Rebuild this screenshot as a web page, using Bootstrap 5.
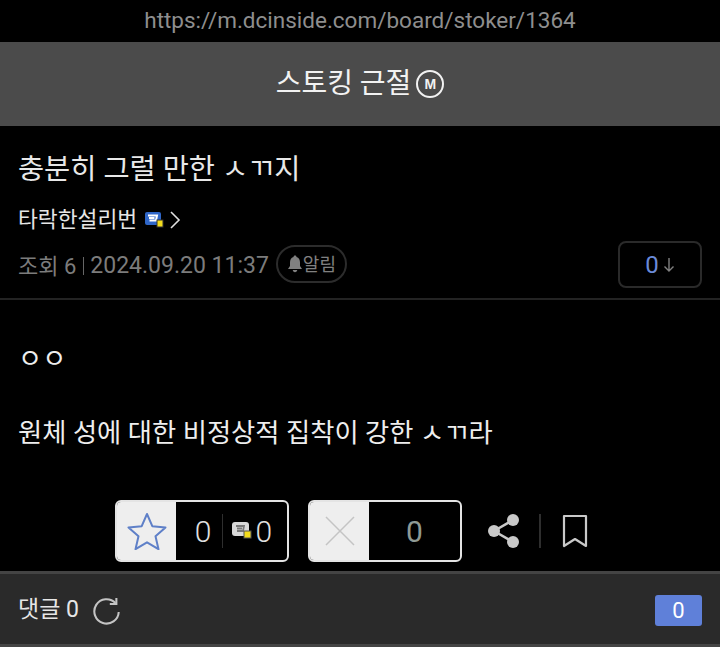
<!DOCTYPE html>
<html lang="ko">
<head>
  <meta charset="UTF-8">
  <title>충분히 그럴 만한 ㅅㄲ지</title>
  <link rel="stylesheet" href="https://cdn.jsdelivr.net/npm/bootstrap@5.3.0/dist/css/bootstrap.min.css">
  <style>
    html, body { height: 647px; overflow: hidden; }
    body {
      background: #000;
      color: #eee;
      font-family: Roboto, "Noto Sans CJK KR", sans-serif;
    }
    .url-bar { height: 42px; color: #8e8e8e; font-size: 22.500px; }
    .board-bar { height: 84px; background: #4b4b4b; color: #f2f2f2; font-size: 28px; font-weight: 400; gap: 5px; }
    .minor-mark {
      width: 28px; height: 28px; border: 2px solid #f2f2f2; border-radius: 50%;
      font: 700 14px "Liberation Sans", sans-serif;
    }
    .post-head { height: 174px; padding: 0 18px; border-bottom: 2px solid #232323; }
    .post-title { height: 84px; font-size: 28.400px; line-height: 88px; margin: 0; font-weight: 400; color: #e8e8e8; }
    .writer-row { height: 30px; margin-top: -5px; font-size: 21.600px; color: #e6e6e6; }
    .meta-row { height: 42px; margin-top: 10px; color: #7c7c7c; font-size: 23px; }
    .view-count { font-size: 22px; }
    .meta-sep { width: 1px; height: 18px; background: #666; margin: 0 6px 0 7px; }
    .alert-pill {
      height: 38px; padding: 0 9px; margin: -4px 0 0 7px; border: 2px solid #2c2c2c; border-radius: 19px;
      font-size: 18px; color: #808080;
    }
    .down-btn {
      width: 84px; height: 47px; margin-top: -3px; border: 2px solid #2a2a2a; border-radius: 8px;
      font-size: 24px; color: #6a8ad8; line-height: 1;
    }
    .post-body { height: 201px; padding: 0 18px; font-size: 26.300px; color: #eee; }
    .body-line { height: 36px; line-height: 36px; margin: 0; }
    .body-one { padding-top: 41px; box-sizing: content-box; }
    .body-two { padding-top: 38px; box-sizing: content-box; }
    .vote-row { height: 62px; margin-top: -1px; padding-left: 115px; }
    .vote-box {
      height: 62px; border: 2px solid #e4e4e4; border-radius: 6px; overflow: hidden;
    }
    .vote-icon { width: 59px; background: #eee; }
    .vote-count { font-size: 30px; font-weight: 300; color: #e0e0e0; }
    .up-box { width: 174px; }
    .up-box .vote-count { padding-left: 4px; }
    .down-box { width: 154px; margin-left: 19px; }
    .down-box .vote-count { color: #8f9a94; font-weight: 400; }
    .count-sep { width: 1px; height: 34px; background: #2e2e2e; margin: 0 9px 0 10px; }
    .badge-icon { overflow: visible; }
    .share-icon { margin-left: 26px; }
    .tool-sep { width: 2px; height: 34px; background: #2e2e2e; margin: 0 21px 0 17px; }
    .reply-bar {
      height: 76px; margin-top: 9px; background: #2a2a2a; border-top: 3px solid #444;
      border-bottom: 3px solid #444; padding: 3px 18px 0; font-size: 23px; color: #e6e6e6;
    }
    .refresh-icon { margin-left: 13px; }
    .reply-count {
      width: 47px; height: 31px; background: #5f80d9; border-radius: 3px; font-size: 22px; color: #fff;
    }
  </style>
</head>
<body>

  <!-- Address bar -->
  <div class="url-bar d-flex align-items-center justify-content-center">https://m.dcinside.com/board/stoker/1364</div>

  <!-- Board name -->
  <div class="board-bar d-flex align-items-center justify-content-center">
    <span>스토킹 근절</span>
    <span class="minor-mark d-flex align-items-center justify-content-center">M</span>
  </div>

  <!-- Post header -->
  <div class="post-head">
    <h1 class="post-title">충분히 그럴 만한 ㅅㄲ지</h1>
    <div class="writer-row d-flex align-items-center">
      <span>타락한설리번</span>
      <svg class="ms-2 badge-icon" width="20" height="18" viewBox="0 0 20 18">
        <rect x="0" y="1" width="16" height="13" rx="2" fill="#2f66c8"/>
        <path d="M3 4.500h9l-1 5H4.500M4 7h5.500" fill="none" stroke="#fff" stroke-width="2"/>
        <rect x="12" y="9" width="6" height="7" fill="#f3dc1c" stroke="#333" stroke-width="1"/>
      </svg>
      <svg class="ms-1" width="12" height="20" viewBox="0 0 12 20" fill="none" stroke="#e0e0e0" stroke-width="1.600">
        <path d="M2 2l8 8-8 8"/>
      </svg>
    </div>
    <div class="meta-row d-flex align-items-center">
      <span class="view-count">조회 6</span>
      <span class="meta-sep"></span>
      <span>2024.09.20 11:37</span>
      <span class="alert-pill d-flex align-items-center">
        <svg width="16" height="18" viewBox="0 0 16 18" fill="#808080">
          <path d="M8 0.5c1 0 1.500.7 1.500 1.400C12 2.600 13 4.800 13 7.500V11l2 3H1l2-3V7.500C3 4.800 4 2.600 6.500 1.900 6.500 1.200 7 .5 8 .5zM5.800 15h4.400c0 1.300-1 2.200-2.200 2.200S5.800 16.300 5.800 15z"/>
        </svg>
        <span>알림</span>
      </span>
      <span class="down-btn ms-auto d-flex align-items-center justify-content-center">
        <span>0</span>
        <svg class="ms-1" width="12" height="16" viewBox="0 0 12 16" fill="none" stroke="#808080" stroke-width="1.400">
          <path d="M6 1v13M1.500 9.500L6 14l4.500-4.500"/>
        </svg>
      </span>
    </div>
  </div>

  <!-- Post body -->
  <div class="post-body">
    <p class="body-line body-one">ㅇㅇ</p>
    <p class="body-line body-two">원체 성에 대한 비정상적 집착이 강한 ㅅㄲ라</p>
  </div>

  <!-- Recommend buttons -->
  <div class="vote-row d-flex align-items-center">
    <div class="vote-box up-box d-flex">
      <div class="vote-icon d-flex align-items-center justify-content-center">
        <svg width="40" height="38" viewBox="0 0 40 38" fill="none" stroke="#5f80c8" stroke-width="2" stroke-linejoin="round">
          <path d="M20 2l5.300 12.200 13.200 1.200-10 8.800 3 13-11.500-6.900-11.500 6.900 3-13-10-8.800 13.200-1.200z"/>
        </svg>
      </div>
      <div class="vote-count flex-grow-1 d-flex align-items-center justify-content-center">
        <span>0</span>
        <span class="count-sep"></span>
        <svg class="me-1 badge-icon" width="20" height="18" viewBox="0 0 20 18">
          <rect x="0" y="0" width="17" height="14" rx="3" fill="#d8d8d8"/>
          <path d="M4 4h8l-1 5H5M5 6.500h5" fill="none" stroke="#777" stroke-width="1.800"/>
          <rect x="12" y="9" width="7" height="7" fill="#f3dc1c" stroke="#555" stroke-width="1"/>
        </svg>
        <span>0</span>
      </div>
    </div>
    <div class="vote-box down-box d-flex">
      <div class="vote-icon d-flex align-items-center justify-content-center">
        <svg width="30" height="30" viewBox="0 0 30 30" fill="none" stroke="#c4c4c4" stroke-width="1.500">
          <path d="M1 1l28 28M29 1L1 29"/>
        </svg>
      </div>
      <div class="vote-count flex-grow-1 d-flex align-items-center justify-content-center">0</div>
    </div>
    <svg class="share-icon" width="34" height="34" viewBox="0 0 34 34" fill="#c9c9c9">
      <circle cx="6" cy="17" r="6"/>
      <circle cx="25" cy="6" r="6"/>
      <circle cx="25" cy="28" r="6"/>
      <path d="M6 17L25 6M6 17l19 11" stroke="#c9c9c9" stroke-width="2.500" fill="none"/>
    </svg>
    <span class="tool-sep"></span>
    <svg width="26" height="34" viewBox="0 0 26 34" fill="none" stroke="#c9c9c9" stroke-width="2.200" stroke-linejoin="round">
      <path d="M2 2h22v30l-11-7-11 7z"/>
    </svg>
  </div>

  <!-- Comments bar -->
  <div class="reply-bar d-flex align-items-center">
    <span>댓글 0</span>
    <svg class="refresh-icon" width="30" height="30" viewBox="0 0 32 30" fill="none" stroke="#c4c4c4" stroke-width="2.200">
      <path d="M25 6.500A13 13 0 1 0 28.500 16"/>
      <path d="M19 7.500h7V1"/>
    </svg>
    <span class="reply-count ms-auto d-flex align-items-center justify-content-center">0</span>
  </div>

</body>
</html>
